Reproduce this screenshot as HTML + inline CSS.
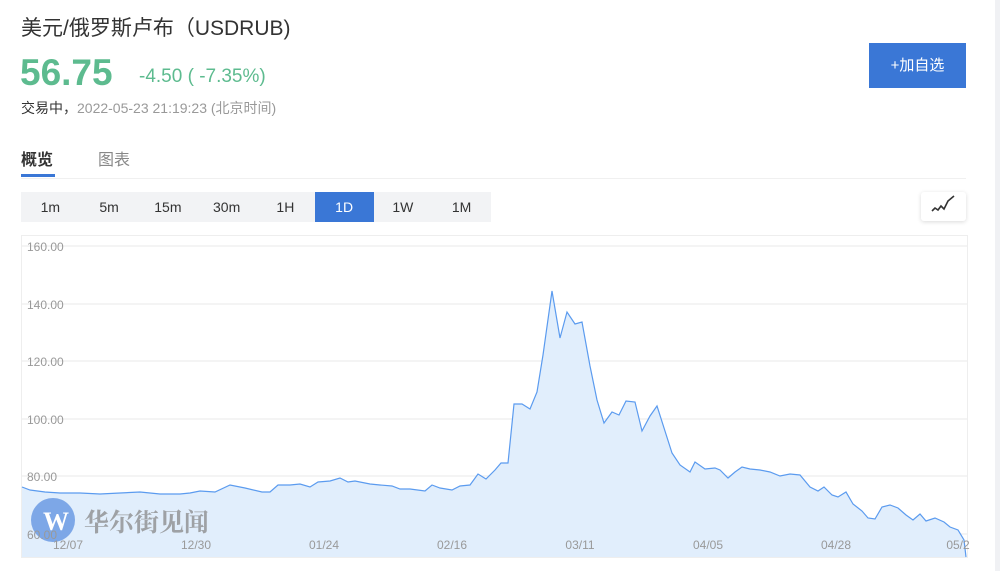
<!DOCTYPE html>
<html><head><meta charset="utf-8"><style>
*{margin:0;padding:0;box-sizing:border-box}
body{width:1000px;height:571px;overflow:hidden;background:#fff;font-family:"Liberation Sans","Noto Sans CJK SC",sans-serif;position:relative}
.abs{position:absolute;white-space:nowrap}
.tf{position:absolute;top:192px;left:21px;width:470px;height:30px;background:#f2f3f5;display:flex}
.tf div{flex:1;text-align:center;line-height:30px;font-size:14px;color:#333}
.tf .on{background:#3a77d6;color:#fff}
</style></head><body>
<div style="position:absolute;right:0;top:0;width:5px;height:571px;background:#f0f1f4"></div>
<div class="abs" style="left:21px;top:12px;font-size:21px;color:#333">美元/俄罗斯卢布（USDRUB)</div>
<div class="abs" style="left:20px;top:52px;font-size:37px;font-weight:bold;color:#5dbb8f">56.75</div>
<div class="abs" style="left:139px;top:66px;font-size:19px;color:#5dbb8f">-4.50 ( -7.35%)</div>
<div class="abs" style="left:21px;top:98px;font-size:14px;color:#333;font-weight:normal">交易中，<span style="color:#999">2022-05-23 21:19:23 (北京时间)</span></div>
<div class="abs" style="left:869px;top:43px;width:97px;height:45px;background:#3a77d6;color:#fff;font-size:15px;text-align:center;line-height:45px">+加自选</div>
<div class="abs" style="left:21px;top:146px;font-size:16px;color:#333;font-weight:bold">概览</div>
<div class="abs" style="left:98px;top:146px;font-size:16px;color:#888">图表</div>
<div class="abs" style="left:21px;top:174px;width:34px;height:3px;background:#3a77d6"></div>
<div class="abs" style="left:21px;top:178px;width:945px;height:1px;background:#f0f0f0"></div>
<div class="tf"><div>1m</div><div>5m</div><div>15m</div><div>30m</div><div>1H</div><div class="on">1D</div><div>1W</div><div>1M</div></div>
<div class="abs" style="left:921px;top:192px;width:45px;height:29px;background:#fff;border-radius:3px;box-shadow:0 1px 4px rgba(0,0,0,.15)">
<svg width="45" height="29"><polyline points="11,19 14,16 17,18 20,14 23,17 27,9 33,4" fill="none" stroke="#333" stroke-width="1.6"/></svg></div>
<svg class="abs" style="left:0;top:0" width="1000" height="571">
<rect x="21.5" y="235.5" width="946" height="322" fill="none" stroke="#eee"/>
<g stroke="#f0f0f0" stroke-width="1.5">
<line x1="22" y1="246" x2="967" y2="246"/><line x1="22" y1="304" x2="967" y2="304"/><line x1="22" y1="361" x2="967" y2="361"/><line x1="22" y1="419" x2="967" y2="419"/><line x1="22" y1="476" x2="967" y2="476"/><line x1="22" y1="534" x2="967" y2="534"/></g>
<g font-size="12" fill="#999" font-family="Liberation Sans,sans-serif">
<text x="27" y="251">160.00</text><text x="27" y="309">140.00</text><text x="27" y="366">120.00</text><text x="27" y="424">100.00</text><text x="27" y="481">80.00</text>
</g>
<polygon fill="#e1eefc" points="22,487 30,490 45,492 60,493 80,493 100,494 120,493 140,492 160,494 180,494 190,493 200,491 215,492 230,485 245,488 262,492 270,492 278,485 290,485 300,484 310,487 318,482 330,481 340,478 348,482 355,481 370,484 380,485 392,486 400,489 410,489 425,491 432,485 440,488 452,490 460,486 470,485 478,474 486,479 495,470 501,463 508,463 514,404 522,404 530,409 537,392 543,355 552,291 560,338 567,312 575,324 582,322 590,366 597,400 604,423 612,412 619,415 626,401 635,402 642,431 650,416 657,406 672,453 680,465 690,472 695,462 705,469 715,468 720,470 728,478 735,472 742,467 750,469 760,470 770,472 780,476 790,474 800,475 810,487 818,491 824,487 832,495 838,497 846,492 853,504 862,511 868,518 875,519 882,507 890,505 898,508 906,515 913,520 920,514 926,521 935,518 944,522 950,527 958,530 964,540 966,557 22,557"/>
<polyline fill="none" stroke="#5b9bef" stroke-width="1.2" points="22,487 30,490 45,492 60,493 80,493 100,494 120,493 140,492 160,494 180,494 190,493 200,491 215,492 230,485 245,488 262,492 270,492 278,485 290,485 300,484 310,487 318,482 330,481 340,478 348,482 355,481 370,484 380,485 392,486 400,489 410,489 425,491 432,485 440,488 452,490 460,486 470,485 478,474 486,479 495,470 501,463 508,463 514,404 522,404 530,409 537,392 543,355 552,291 560,338 567,312 575,324 582,322 590,366 597,400 604,423 612,412 619,415 626,401 635,402 642,431 650,416 657,406 672,453 680,465 690,472 695,462 705,469 715,468 720,470 728,478 735,472 742,467 750,469 760,470 770,472 780,476 790,474 800,475 810,487 818,491 824,487 832,495 838,497 846,492 853,504 862,511 868,518 875,519 882,507 890,505 898,508 906,515 913,520 920,514 926,521 935,518 944,522 950,527 958,530 964,540 966,557"/>
<circle cx="53" cy="520" r="22" fill="#5b8fe0" opacity=".75"/>
<text x="43" y="530" font-size="26" font-weight="bold" fill="#fff" font-family="Liberation Serif,serif">W</text>
<text x="84" y="531" font-size="25" font-weight="bold" fill="#888" opacity=".75" font-family="Noto Serif CJK SC,serif">华尔街见闻</text>
<text x="27" y="539" font-size="12" fill="#999" font-family="Liberation Sans,sans-serif">60.00</text>
<g font-size="12" fill="#999" font-family="Liberation Sans,sans-serif" text-anchor="middle">
<text x="68" y="549">12/07</text><text x="196" y="549">12/30</text><text x="324" y="549">01/24</text><text x="452" y="549">02/16</text><text x="580" y="549">03/11</text><text x="708" y="549">04/05</text><text x="836" y="549">04/28</text><text x="958" y="549">05/2</text></g>
</svg>
</body></html>
